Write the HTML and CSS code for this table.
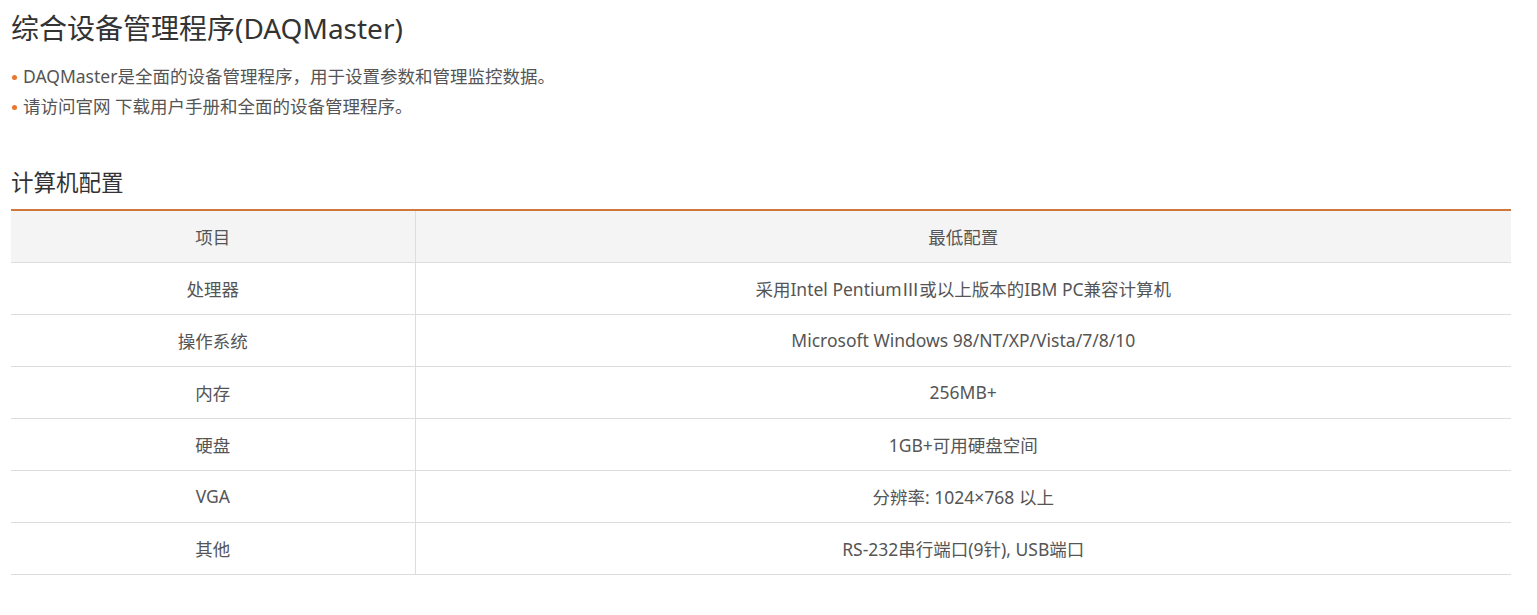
FILE: index.html
```html
<!DOCTYPE html>
<html lang="zh-CN">
<head>
<meta charset="utf-8">
<title>综合设备管理程序(DAQMaster)</title>
<link rel="stylesheet" href="styles.css">
</head>
<body>
<div class="page">
  <h1 class="title">综合设备管理程序(DAQMaster)</h1>
  <ul class="bullets">
    <li>DAQMaster是全面的设备管理程序，用于设置参数和管理监控数据。</li>
    <li>请访问官网 下载用户手册和全面的设备管理程序。</li>
  </ul>
  <h2 class="section">计算机配置</h2>
  <table class="spec">
    <thead>
      <tr><th class="col-item">项目</th><th>最低配置</th></tr>
    </thead>
    <tbody>
      <tr><td>处理器</td><td>采用Intel PentiumⅢ或以上版本的IBM PC兼容计算机</td></tr>
      <tr><td>操作系统</td><td>Microsoft Windows 98/NT/XP/Vista/7/8/10</td></tr>
      <tr><td>内存</td><td>256MB+</td></tr>
      <tr><td>硬盘</td><td>1GB+可用硬盘空间</td></tr>
      <tr><td>VGA</td><td>分辨率: 1024×768 以上</td></tr>
      <tr><td>其他</td><td>RS-232串行端口(9针), USB端口</td></tr>
    </tbody>
  </table>
</div>
</body>
</html>
```
FILE: styles.css
```css
* { box-sizing: border-box; }
html, body { margin: 0; padding: 0; background: #fff; }
body {
  font-family: "Noto Sans", "Noto Sans CJK SC", sans-serif;
  color: #555;
}
.page {
  padding: 8px 0 0 11px;
  width: 1511px;
}
.title {
  margin: 0;
  font-size: 28px;
  font-weight: 400;
  line-height: 40px;
  color: #333;
}
.bullets {
  list-style: none;
  margin: 13px 0 0;
  padding: 0;
}
.bullets li {
  position: relative;
  padding-left: 12px;
  font-size: 17.5px;
  line-height: 30px;
  color: #555;
}
.bullets li::before {
  content: "";
  position: absolute;
  left: 1px;
  top: 14px;
  width: 5px;
  height: 5px;
  border-radius: 50%;
  background: #e8762d;
}
.section {
  margin: 47px 0 0;
  font-size: 22.5px;
  font-weight: 400;
  line-height: 30px;
  color: #333;
}
.spec {
  margin-top: 11px;
  width: 1500px;
  border-collapse: collapse;
  border-top: 2px solid #d0773e;
  font-size: 17.5px;
  color: #555;
}
.spec th, .spec td {
  height: 52px;
  padding: 0 10px;
  text-align: center;
  font-weight: 400;
  border-bottom: 1px solid #ddd;
  border-left: 1px solid #ddd;
}
.spec th:first-child, .spec td:first-child { border-left: none; }
.spec thead th { background: #f4f4f4; height: 52px; }
.col-item { width: 404px; }
```
